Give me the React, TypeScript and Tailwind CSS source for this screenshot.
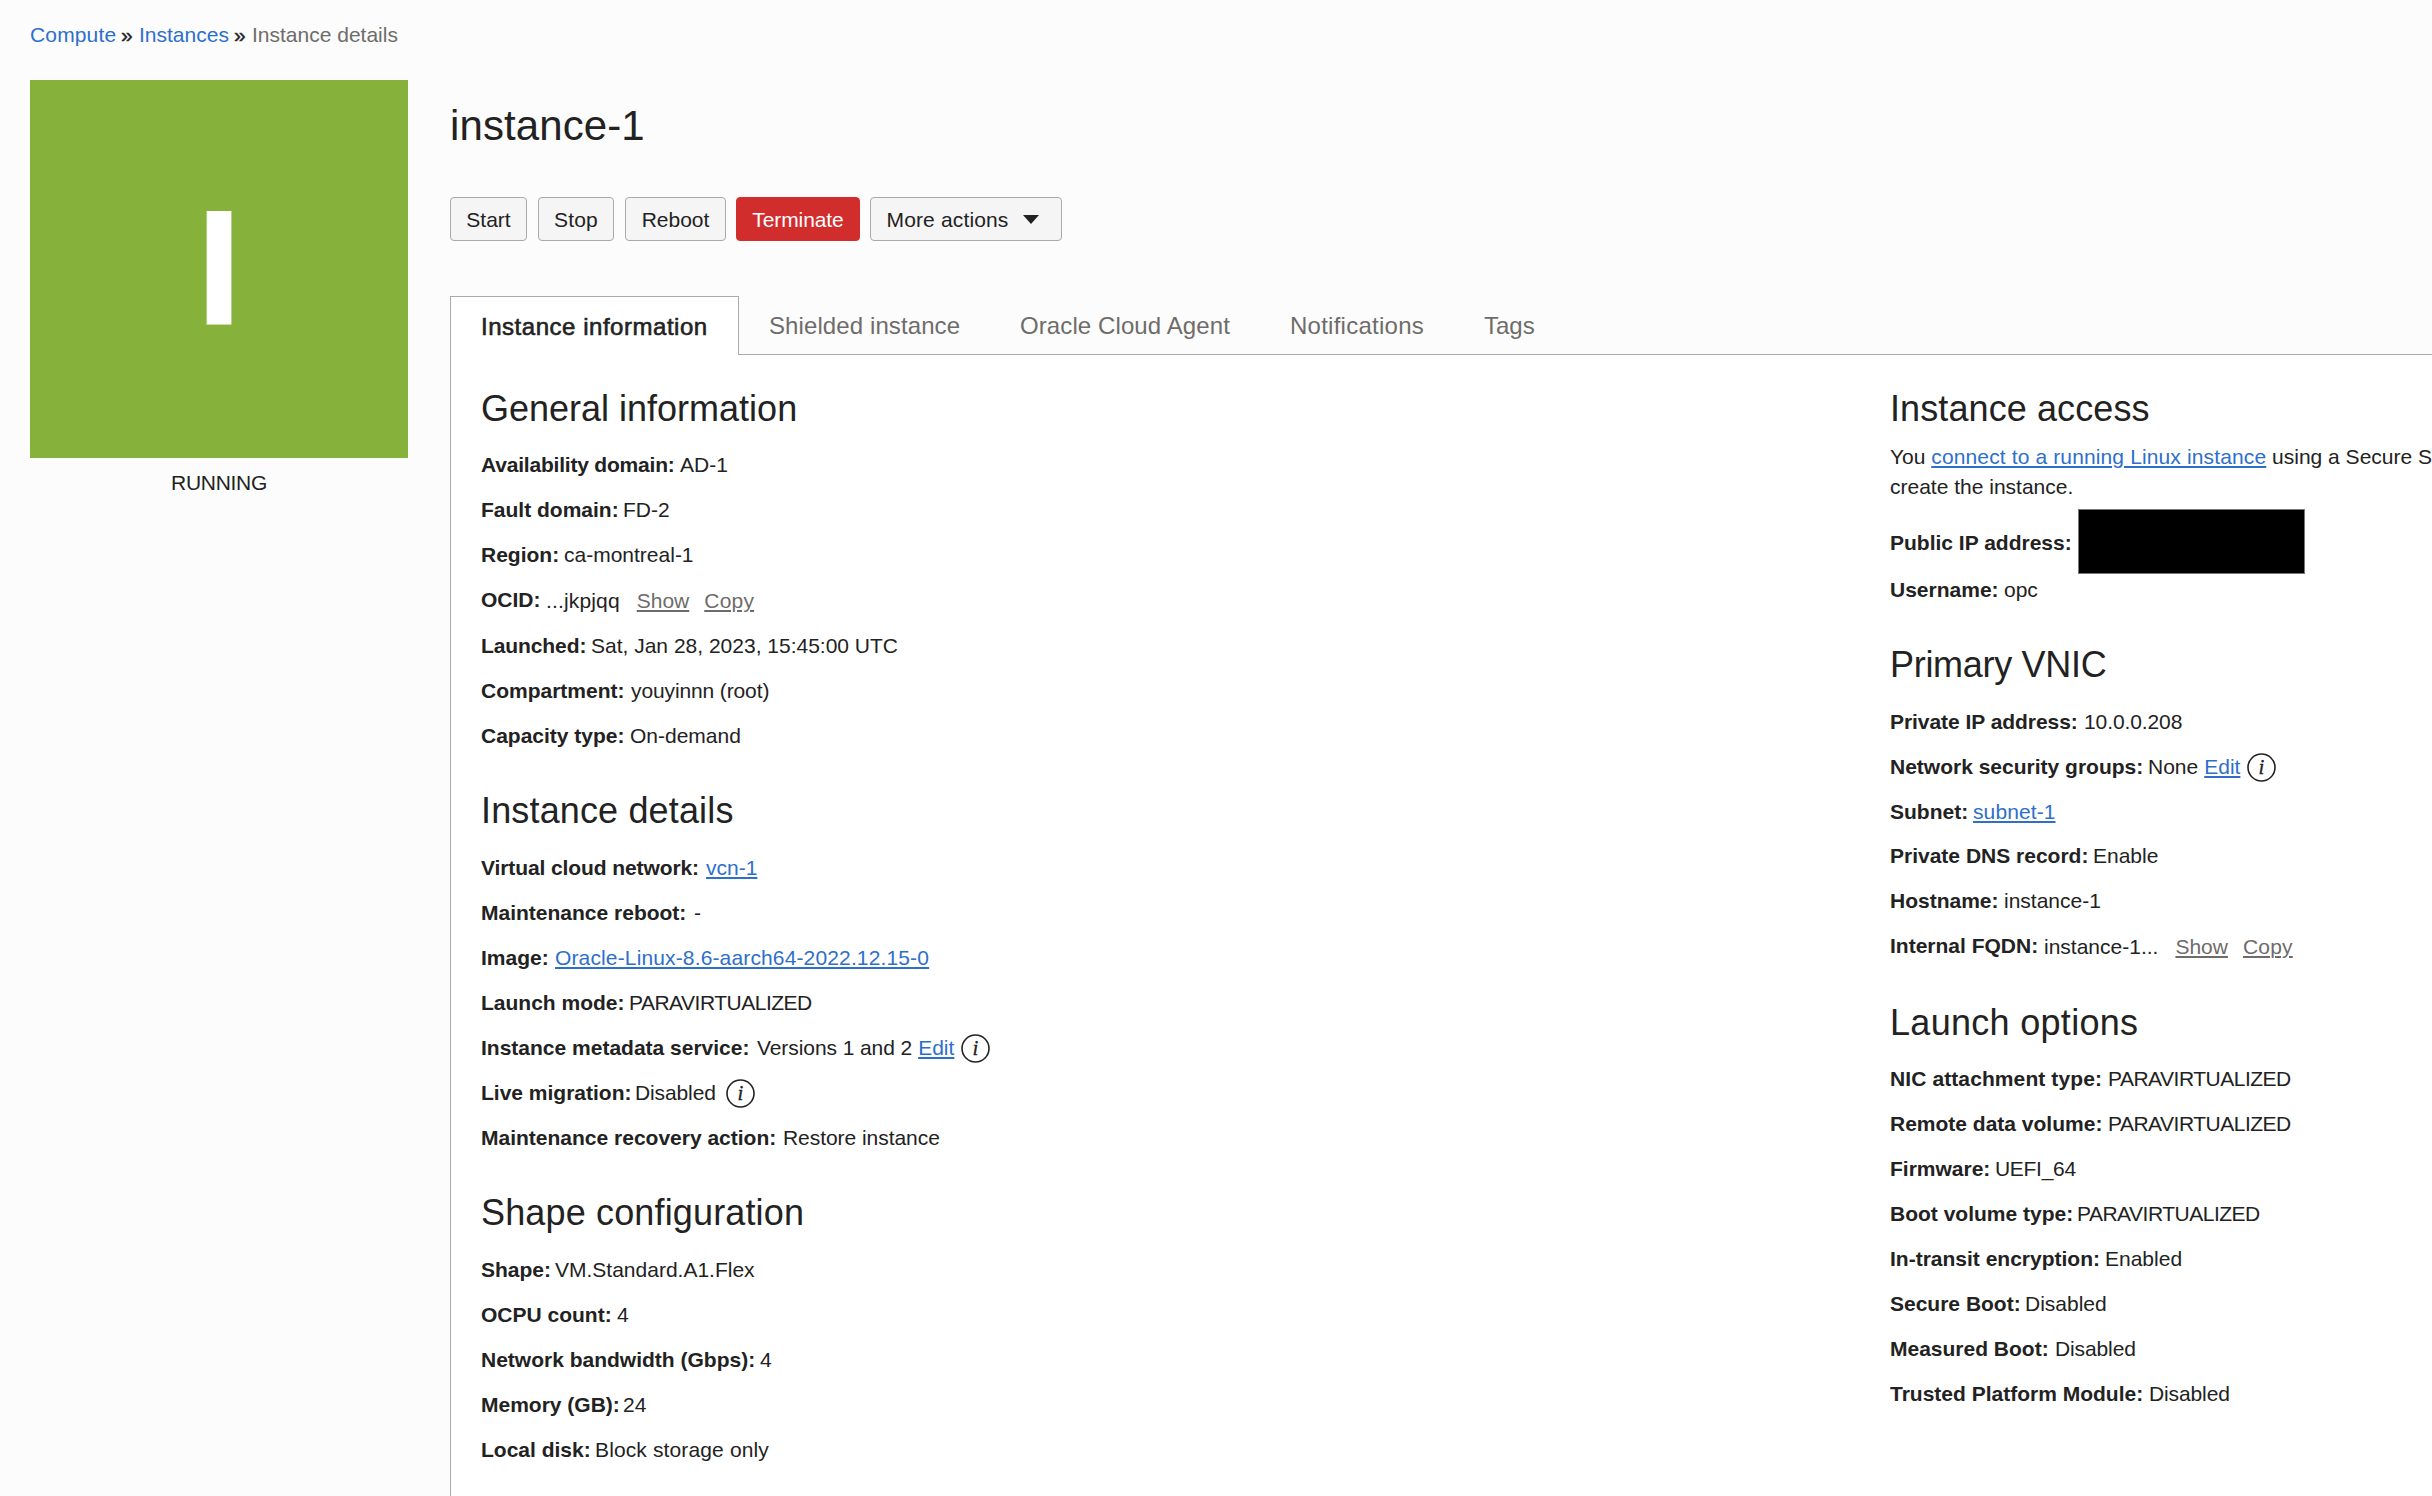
import type { ReactNode } from "react";

type RowProps = {
  label: string;
  width: string;
  children: ReactNode;
  className?: string;
};

function Row({ label, width, children, className = "h-[30px]" }: RowProps) {
  return (
    <div className={`flex items-baseline whitespace-nowrap ${className}`}>
      <dt className={`shrink-0 font-bold ${width}`}>{label}</dt>
      <dd className="flex items-baseline">{children}</dd>
    </div>
  );
}

type SectionProps = {
  title: string;
  className?: string;
  titleClass?: string;
  children: ReactNode;
};

function Section({ title, className = "", titleClass = "mb-5", children }: SectionProps) {
  return (
    <section className={className}>
      <h2 className={`h-11 text-[36px] leading-[44px] whitespace-nowrap ${titleClass}`}>{title}</h2>
      <dl className="flex flex-col gap-[15px]">{children}</dl>
    </section>
  );
}

function Link({ children, className = "" }: { children: ReactNode; className?: string }) {
  return (
    <a
      href="#"
      className={`text-[#2d6fcb] underline decoration-2 underline-offset-2 ${className}`}
    >
      {children}
    </a>
  );
}

function GreyLink({ children, className = "" }: { children: ReactNode; className?: string }) {
  return (
    <a
      href="#"
      className={`relative top-px text-[#6e6c6a] underline decoration-2 underline-offset-2 ${className}`}
    >
      {children}
    </a>
  );
}

function InfoIcon({ className = "" }: { className?: string }) {
  return (
    <svg
      className={`shrink-0 self-center ${className}`}
      width="29"
      height="29"
      viewBox="0 0 29 29"
      fill="none"
    >
      <circle cx="14.5" cy="14.5" r="13.5" stroke="#222" strokeWidth="1.6" />
      <text
        x="14.3"
        y="20.5"
        textAnchor="middle"
        className="fill-[#222] stroke-[#222] stroke-[0.3px] font-['Liberation_Serif',serif] text-[21px] italic"
      >
        i
      </text>
    </svg>
  );
}

const buttonBase =
  "flex h-11 items-center justify-center rounded-[4px] border pt-[2px] whitespace-nowrap";

const Para = () => <span className="tracking-[-0.5px]">PARAVIRTUALIZED</span>;

const Chevrons = () => (
  <span className="w-[18px] [-webkit-text-stroke:0.4px_#222]">»</span>
);

export default function App() {
  return (
    <div className="h-[1496px] w-[2432px] overflow-hidden bg-[#fcfcfc] font-['Liberation_Sans',Arial,sans-serif] text-[21px] leading-[30px] text-[#222]">
      <nav className="flex h-[80px] items-start pt-5 pl-[30px] whitespace-nowrap">
        <a href="#" className="w-[91px] tracking-[0.15px] text-[#2d6fcb]">Compute</a>
        <Chevrons />
        <a href="#" className="w-[95px] text-[#2d6fcb]">Instances</a>
        <Chevrons />
        <span className="text-[#6e6c6a]">Instance details</span>
      </nav>

      <div className="flex">
        <aside className="ml-[30px] w-[378px] shrink-0">
          <div className="h-[378px] bg-[#86b23b] text-center text-[164px] leading-[376px] font-bold text-white [-webkit-text-stroke:1px_#fff]">
            I
          </div>
          <p className="mt-[10px] text-center tracking-[-0.3px]">RUNNING</p>
        </aside>

        <main className="ml-[42px] flex w-[1990px] shrink-0 flex-col">
          <h1 className="mt-[21px] h-[50px] text-[42px] leading-[50px] tracking-[0.1px]">instance-1</h1>

          <div className="mt-[46px] flex">
            <button className={`${buttonBase} w-[77px] border-[#aaa] bg-[#f5f5f5]`}>Start</button>
            <button className={`${buttonBase} ml-[11px] w-[76px] border-[#aaa] bg-[#f5f5f5] tracking-[0.2px]`}>Stop</button>
            <button className={`${buttonBase} ml-[11px] w-[101px] border-[#aaa] bg-[#f5f5f5]`}>Reboot</button>
            <button className={`${buttonBase} ml-[10px] w-[124px] border-[#d22d2d] bg-[#d22d2d] tracking-[-0.1px] text-white`}>
              Terminate
            </button>
            <button className={`${buttonBase} ml-[10px] w-[192px] border-[#aaa] bg-[#f5f5f5] pr-[7px] tracking-[0.15px]`}>
              More actions
              <svg className="-mt-[2px] ml-[14px]" width="16" height="9" viewBox="0 0 16 9" fill="#222">
                <path d="M0 0h16L8 9z" />
              </svg>
            </button>
          </div>

          <div className="mt-[55px] flex h-[59px] text-[24px] whitespace-nowrap text-[#6e6c6a]">
            <div className="w-[289px] border-x border-t border-[#aaa] bg-white pt-[15px] pl-[30px] tracking-[0.53px] text-[#222] [-webkit-text-stroke:0.6px_#222]">
              Instance information
            </div>
            <div className="flex grow border-b border-[#aaa] pt-[15px] pl-[30px]">
              <span className="w-[251px] tracking-[0.1px]">Shielded instance</span>
              <span className="w-[270px] tracking-[0.1px]">Oracle Cloud Agent</span>
              <span className="w-[194px] tracking-[0.25px]">Notifications</span>
              <span>Tags</span>
            </div>
          </div>

          <div className="flex h-[1141px] border-l border-[#aaa] bg-white pt-8 pl-[30px]">
            <div className="w-[1409px] shrink-0">
              <Section title="General information" titleClass="mb-[19px]">
                <Row label="Availability domain:" width="w-[199px] tracking-[-0.2px]">AD-1</Row>
                <Row label="Fault domain:" width="w-[142px]">FD-2</Row>
                <Row label="Region:" width="w-[83px]">ca-montreal-1</Row>
                <Row label="OCID:" width="w-[65px]" className="h-[31px]">
                  <span className="relative top-px tracking-[0.15px]">...jkpjqq</span>
                  <GreyLink className="ml-[17px]">Show</GreyLink>
                  <GreyLink className="ml-[15px] tracking-[0.2px]">Copy</GreyLink>
                </Row>
                <Row label="Launched:" width="w-[110px] tracking-[-0.1px]">Sat, Jan 28, 2023, 15:45:00 UTC</Row>
                <Row label="Compartment:" width="w-[150px]">
                  <span className="tracking-[-0.12px]">youyinnn (root)</span>
                </Row>
                <Row label="Capacity type:" width="w-[149px]">On-demand</Row>
              </Section>

              <Section title="Instance details" className="mt-[38px]" titleClass="mb-5 tracking-[0.15px]">
                <Row label="Virtual cloud network:" width="w-[225px] tracking-[-0.1px]">
                  <Link>vcn-1</Link>
                </Row>
                <Row label="Maintenance reboot:" width="w-[213px]">-</Row>
                <Row label="Image:" width="w-[74px]">
                  <Link className="tracking-[0.14px]">Oracle-Linux-8.6-aarch64-2022.12.15-0</Link>
                </Row>
                <Row label="Launch mode:" width="w-[148px]"><Para /></Row>
                <Row label="Instance metadata service:" width="w-[276px]">
                  <span className="tracking-[-0.08px]">Versions 1 and 2</span>
                  <Link className="ml-[6px]">Edit</Link>
                  <InfoIcon className="ml-[7px]" />
                </Row>
                <Row label="Live migration:" width="w-[154px]">
                  <span className="tracking-[-0.12px]">Disabled</span>
                  <InfoIcon className="ml-[10px]" />
                </Row>
                <Row label="Maintenance recovery action:" width="w-[302px]">
                  <span className="tracking-[-0.05px]">Restore instance</span>
                </Row>
              </Section>

              <Section title="Shape configuration" className="mt-[38px]" titleClass="mb-5 tracking-[0.15px]">
                <Row label="Shape:" width="w-[74px]">VM.Standard.A1.Flex</Row>
                <Row label="OCPU count:" width="w-[136px]">4</Row>
                <Row label="Network bandwidth (Gbps):" width="w-[279px]">4</Row>
                <Row label="Memory (GB):" width="w-[142px]">24</Row>
                <Row label="Local disk:" width="w-[114px]">
                  <span className="tracking-[0.13px]">Block storage only</span>
                </Row>
              </Section>
            </div>

            <div className="w-[542px] shrink-0 overflow-hidden">
              <section>
                <h2 className="h-11 text-[36px] leading-[44px] tracking-[0.1px]">Instance access</h2>
                <p className="mt-[11px] whitespace-nowrap">
                  You <Link className="tracking-[0.13px]">connect to a running Linux instance</Link> using a Secure Shell
                  <br />
                  create the instance.
                </p>
                <dl className="mt-[26px] flex flex-col gap-[17px]">
                  <div className="flex h-[30px] items-center whitespace-nowrap">
                    <dt className="w-[188px] shrink-0 font-bold">Public IP address:</dt>
                    <dd className="relative -top-[2px] h-[65px] w-[227px] shrink-0 border border-[#777] bg-black" />
                  </div>
                  <Row label="Username:" width="w-[114px]">opc</Row>
                </dl>
              </section>

              <Section title="Primary VNIC" className="mt-[38px]" titleClass="mb-5 tracking-[-0.3px]">
                <Row label="Private IP address:" width="w-[194px] tracking-[-0.05px]">
                  <span className="tracking-[-0.1px]">10.0.0.208</span>
                </Row>
                <Row label="Network security groups:" width="w-[258px]">
                  None
                  <Link className="ml-[6px]">Edit</Link>
                  <InfoIcon className="ml-[7px]" />
                </Row>
                <Row label="Subnet:" width="w-[83px]" className="h-[29px]">
                  <Link className="tracking-[0.1px]">subnet-1</Link>
                </Row>
                <Row label="Private DNS record:" width="w-[203px]">Enable</Row>
                <Row label="Hostname:" width="w-[114px]">instance-1</Row>
                <Row label="Internal FQDN:" width="w-[154px]">
                  <span className="relative top-px">instance-1...</span>
                  <GreyLink className="ml-[17px]">Show</GreyLink>
                  <GreyLink className="ml-[15px] tracking-[0.2px]">Copy</GreyLink>
                </Row>
              </Section>

              <Section title="Launch options" className="mt-10" titleClass="mb-[19px] tracking-[0.3px]">
                <Row label="NIC attachment type:" width="w-[218px] tracking-[0.1px]"><Para /></Row>
                <Row label="Remote data volume:" width="w-[218px]"><Para /></Row>
                <Row label="Firmware:" width="w-[105px]">
                  <span className="tracking-[-0.3px]">UEFI_64</span>
                </Row>
                <Row label="Boot volume type:" width="w-[187px]"><Para /></Row>
                <Row label="In-transit encryption:" width="w-[215px]">Enabled</Row>
                <Row label="Secure Boot:" width="w-[135px]">Disabled</Row>
                <Row label="Measured Boot:" width="w-[165px]">
                  <span className="tracking-[-0.12px]">Disabled</span>
                </Row>
                <Row label="Trusted Platform Module:" width="w-[259px]">
                  <span className="tracking-[-0.12px]">Disabled</span>
                </Row>
              </Section>
            </div>
          </div>
        </main>
      </div>
    </div>
  );
}
